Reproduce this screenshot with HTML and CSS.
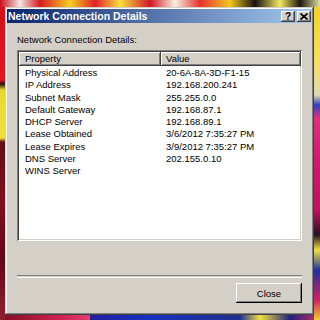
FILE: index.html
```html
<!DOCTYPE html>
<html>
<head>
    <title>Network Connection Details</title>
    <link rel="stylesheet" href="styles.css">
</head>
<body>
    <div class="window">
        <div class="titlebar">
            <span class="title">Network Connection Details</span>
            <div class="caption-buttons">
                <span class="cap-btn help">?</span>
                <span class="cap-btn close-x">
                    <svg width="8" height="7" viewBox="0 0 8 7">
                        <path d="M0.5 0.5 L7.5 6.5 M7.5 0.5 L0.5 6.5" stroke="#000" stroke-width="1.6" fill="none"/>
                    </svg>
                </span>
            </div>
        </div>
        <div class="client">
            <div class="label">Network Connection Details:</div>
            <div class="list">
                <div class="list-head">
                    <div class="col-head">Property</div>
                    <div class="col-head">Value</div>
                </div>
                <div class="list-body">
                    <div class="row"><span>Physical Address</span><span>20-6A-8A-3D-F1-15</span></div>
                    <div class="row"><span>IP Address</span><span>192.168.200.241</span></div>
                    <div class="row"><span>Subnet Mask</span><span>255.255.0.0</span></div>
                    <div class="row"><span>Default Gateway</span><span>192.168.87.1</span></div>
                    <div class="row"><span>DHCP Server</span><span>192.168.89.1</span></div>
                    <div class="row"><span>Lease Obtained</span><span>3/6/2012 7:35:27 PM</span></div>
                    <div class="row"><span>Lease Expires</span><span>3/9/2012 7:35:27 PM</span></div>
                    <div class="row"><span>DNS Server</span><span>202.155.0.10</span></div>
                    <div class="row"><span>WINS Server</span><span></span></div>
                </div>
            </div>
            <div class="separator"></div>
            <div class="actions">
                <button type="button" class="btn">Close</button>
            </div>
        </div>
    </div>
</body>
</html>
```

FILE: styles.css
```css
html, body {
    margin: 0;
    height: 320px;
    overflow: hidden;
}
body {
    font-family: "Liberation Sans", Arial, sans-serif;
    font-size: 9.5px;
    color: #000;
    padding: 7px 6px 0 5px;
    box-sizing: border-box;
    background:
        linear-gradient(to right, #c81018 0, #f0e8e0 20px, #d81820 40px, #f4d020 70px, #e02028 95px, #f8e040 120px, #d01828 150px, #f8f0e0 175px, #e83030 200px, #f0c820 230px, #181010 255px, #f4e860 280px, #201810 300px, #e0e0a0 320px) top left / 100% 7px no-repeat,
        linear-gradient(to bottom, #d01018 0, #e01820 80px, #301010 84px, #e8d830 90px, #f0e040 138px, #601018 142px, #801020 200px, #600818 260px, #902030 320px) top left / 5px 100% no-repeat,
        linear-gradient(to bottom, #f0d020 0, #f8e060 60px, #e0d8b0 95px, #3040c0 105px, #e03080 118px, #d01870 160px, #c01060 210px, #281020 235px, #f0e040 250px, #2030a0 270px, #d02060 300px, #f0d030 320px) top right / 6px 100% no-repeat,
        linear-gradient(to right, #801020 0, #d02050 60px, #e04070 90px, #f080a0 80px, #2020a0 85px, #1830c0 150px, #203090 240px, #f0e040 260px, #202080 290px, #d03060 320px) bottom left / 100% 5px no-repeat,
        #402040;
}
.window {
    width: 309px;
    height: 308px;
    box-sizing: border-box;
    background-color: #d4d0c8;
    padding: 2px;
    box-shadow: inset -1px -1px 0 #404040, inset 1px 1px 0 #d4d0c8, inset -2px -2px 0 #808080, inset 2px 2px 0 #fff;
    display: flex;
    flex-direction: column;
}
.titlebar {
    height: 14px;
    background: linear-gradient(to right, #0a246a, #a6caf0);
    display: flex;
    align-items: center;
    justify-content: space-between;
    padding: 0 1px 0 1px;
}
.title {
    color: #fff;
    font-weight: bold;
    font-size: 10.5px;
    line-height: 14px;
}
.caption-buttons {
    display: flex;
    gap: 2px;
}
.cap-btn {
    width: 14px;
    height: 11px;
    box-sizing: border-box;
    background-color: #d4d0c8;
    box-shadow: inset -1px -1px 0 #404040, inset 1px 1px 0 #fff, inset -2px -2px 0 #808080;
    display: flex;
    align-items: center;
    justify-content: center;
    font-weight: bold;
    font-size: 10px;
    line-height: 11px;
}
.client {
    flex: 1;
    padding: 11px 10px 10px 10px;
    display: flex;
    flex-direction: column;
}
.label {
    line-height: 12px;
    margin-bottom: 4px;
}
.list {
    height: 191px;
    box-sizing: border-box;
    background-color: #fff;
    padding: 2px;
    box-shadow: inset 1px 1px 0 #808080, inset -1px -1px 0 #fff, inset 2px 2px 0 #404040, inset -2px -2px 0 #d4d0c8;
}
.list-head {
    display: grid;
    grid-template-columns: 142px 140px;
    height: 14px;
}
.col-head {
    background-color: #d4d0c8;
    box-shadow: inset -1px -1px 0 #404040, inset 1px 1px 0 #fff, inset -2px -2px 0 #808080;
    padding-left: 6px;
    line-height: 14px;
}
.col-head + .col-head {
    padding-left: 5px;
}
.list-body {
    padding-top: 1px;
}
.row {
    display: grid;
    grid-template-columns: 142px 1fr;
    height: 12.3px;
    line-height: 12.3px;
}
.row span:first-child {
    padding-left: 6px;
}
.row span + span {
    padding-left: 5px;
}
.separator {
    margin-top: 34px;
    height: 1px;
    border-top: 1px solid #808080;
    border-bottom: 1px solid #fff;
    background: none;
    margin-bottom: 5px;
}
.actions {
    display: flex;
    justify-content: flex-end;
}
.btn {
    width: 66px;
    height: 20px;
    font-family: "Liberation Sans", Arial, sans-serif;
    font-size: 9.5px;
    color: #000;
    background-color: #d4d0c8;
    border: none;
    padding: 0;
    box-shadow: inset -1px -1px 0 #000, inset 1px 1px 0 #fff, inset -2px -2px 0 #808080;
}
```
